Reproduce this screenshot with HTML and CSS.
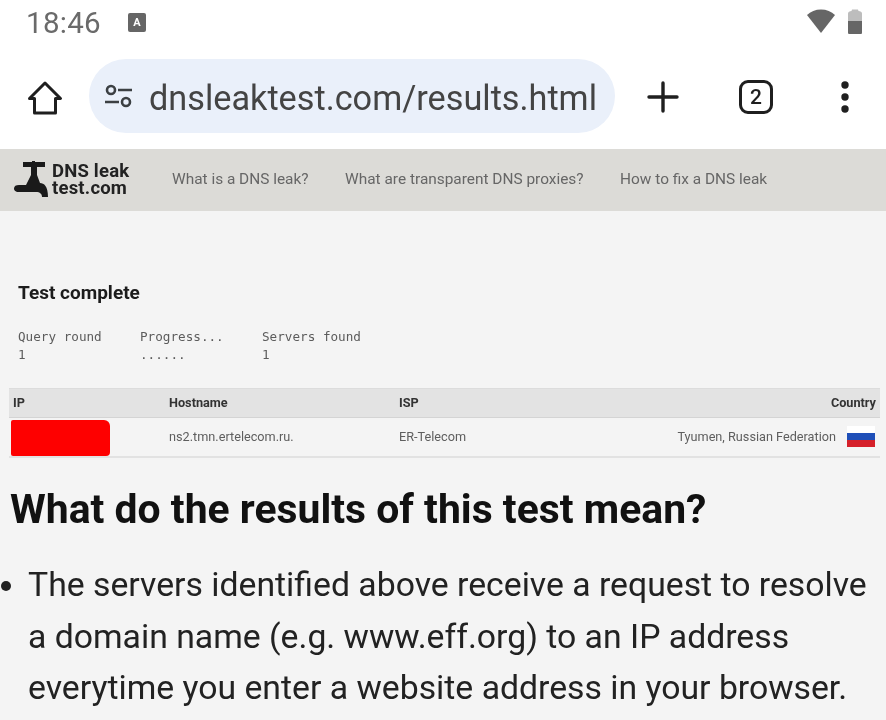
FILE: index.html
```html
<!DOCTYPE html>
<html lang="en">
<head>
<meta charset="utf-8">
<title>dnsleaktest.com results</title>
<link rel="stylesheet" href="styles.css">
</head>
<body>
<div class="screen">
  <header class="status">
    <div class="status-left">
      <span class="clock">18:46</span>
      <span class="a-badge">A</span>
    </div>
    <div class="status-right">
      <svg class="wifi" width="28" height="24" viewBox="0 0 28 24"><path d="M0 6C3.500 2.500 8.500 0.500 14 0.500S24.500 2.500 28 6L14 24Z" fill="#666"/></svg>
      <svg class="battery" width="14" height="25" viewBox="0 0 14 25"><path d="M4 0.500H10L10.500 2C12.500 2 14 3 14 4.500V12H0V4.500C0 3 1.500 2 3.500 2Z" fill="#bdbdbd"/><path d="M0 12H14V23.500C14 24.500 13.500 25 12.500 25H1.500C0.500 25 0 24.500 0 23.500Z" fill="#666"/></svg>
    </div>
  </header>

  <div class="toolbar">
    <svg class="home" width="36" height="36" viewBox="0 0 36 36" fill="none" stroke="#1f1f1f" stroke-width="3" stroke-linejoin="round"><path d="M2.500 18.500L18 3L33.500 18.500H28.500V33H7.500V18.500Z"/></svg>
    <div class="omnibox">
      <svg class="tune" width="30" height="24" viewBox="0 0 30 24" fill="none" stroke="#3c4043" stroke-width="2.600"><circle cx="7" cy="6" r="4"/><path d="M14 6H28M1 18H15"/><circle cx="22" cy="18" r="4"/></svg>
      <span class="url">dnsleaktest.com/results.html</span>
    </div>
    <svg class="plus" width="32" height="32" viewBox="0 0 32 32" stroke="#1f1f1f" stroke-width="3.400" stroke-linecap="round"><path d="M16 2V30M2 16H30"/></svg>
    <div class="tabs">2</div>
    <svg class="more" width="12" height="32" viewBox="0 0 12 32" fill="#1f1f1f"><circle cx="6" cy="4" r="3.700"/><circle cx="6" cy="16" r="3.700"/><circle cx="6" cy="28" r="3.700"/></svg>
  </div>

  <main class="page">
    <nav class="site-nav">
      <div class="logo">
        <svg class="tap" width="34" height="38" viewBox="0 0 34 38" fill="#1a1a1a"><path d="M18 1V0H21V1H31V6H23V14L26 22C30 22 34 25 34 36H28C28 33 26 31 22 31H5C1 31 0 29 0 27.500C0 25 2 24 5 24H12L17 14V6H9V1Z"/></svg>
        <div class="logo-text">DNS leak test.com</div>
      </div>
      <a class="nav-link">What is a DNS leak?</a>
      <a class="nav-link">What are transparent DNS proxies?</a>
      <a class="nav-link">How to fix a DNS leak</a>
    </nav>

    <h2 class="test-title">Test complete</h2>

    <div class="stats">
      <div class="stat"><span>Query round</span><span>1</span></div>
      <div class="stat"><span>Progress...</span><span>......</span></div>
      <div class="stat"><span>Servers found</span><span>1</span></div>
    </div>

    <table class="results">
      <thead>
        <tr><th class="c-ip">IP</th><th class="c-host">Hostname</th><th class="c-isp">ISP</th><th class="c-country">Country</th></tr>
      </thead>
      <tbody>
        <tr>
          <td class="c-ip"><div class="redact"></div></td>
          <td class="c-host">ns2.tmn.ertelecom.ru.</td>
          <td class="c-isp">ER-Telecom</td>
          <td class="c-country"><div class="place">Tyumen, Russian Federation<span class="flag"><i class="fw"></i><i class="fb"></i><i class="fr"></i></span></div></td>
        </tr>
      </tbody>
    </table>

    <h1 class="heading">What do the results of this test mean?</h1>
    <ul class="list">
      <li>The servers identified above receive a request to resolve a domain name (e.g. www.eff.org) to an IP address everytime you enter a website address in your browser.</li>
    </ul>
  </main>
</div>
</body>
</html>
```

FILE: styles.css
```css
* { box-sizing: border-box; }
html, body { margin: 0; padding: 0; background: #fff; }
body { width: 886px; height: 720px; overflow: hidden; font-family: Roboto, "Liberation Sans", sans-serif; }
.screen { width: 886px; height: 720px; overflow: hidden; display: flex; flex-direction: column; filter: blur(0.4px); }

.status { height: 45px; flex: none; display: flex; justify-content: space-between; align-items: center; padding: 0 24px 0 26px; }
.status-left { display: flex; align-items: center; gap: 27px; }
.clock { font-size: 29.500px; color: #6a6a6a; letter-spacing: 0.300px; }
.a-badge { width: 18px; height: 19px; background: #666; color: #fff; font-size: 11px; font-weight: 700; border-radius: 2px; display: flex; align-items: center; justify-content: center; }
.status-right { display: flex; align-items: center; gap: 13px; margin-bottom: 3px; }

.toolbar { height: 104px; flex: none; display: flex; align-items: center; padding: 0 0 0 27px; }
.home { flex: none; margin-right: 26px; margin-top: 2px; }
.omnibox { width: 526px; height: 74px; flex: none; background: #eaf0fa; border-radius: 37px; display: flex; align-items: center; padding-left: 15px; gap: 15px; margin-top: -2px; }
.tune { flex: none; }
.url { font-size: 34.250px; color: #444; white-space: nowrap; padding-top: 4px; }
.plus { flex: none; margin-left: 32px; }
.tabs { width: 34px; height: 34px; flex: none; margin-left: 60px; border: 3px solid #1f1f1f; border-radius: 9px; font-size: 21px; font-weight: 500; color: #1f1f1f; display: flex; align-items: center; justify-content: center; }
.more { flex: none; margin-left: 66px; }

.page { flex: 1; background: #f4f4f4; overflow: hidden; }
.site-nav { height: 62px; background: #dcdbd7; display: flex; align-items: center; padding: 0 0 3px 14px; }
.logo { display: flex; align-items: center; gap: 4px; width: 158px; flex: none; }
.tap { flex: none; margin-top: 3px; }
.logo-text { width: 84px; font-size: 18.500px; font-weight: 700; line-height: 17px; color: #222; letter-spacing: 0.200px; padding-top: 2px; }
.nav-link { font-size: 15.420px; color: #666; margin-right: 36.500px; white-space: nowrap; }

.test-title { margin: 72px 0 0 18px; font-size: 19px; line-height: 20px; font-weight: 700; color: #1c1c1c; }
.stats { display: flex; margin: 25px 0 0 18px; font-family: "DejaVu Sans Mono", monospace; font-size: 12.650px; line-height: 18px; color: #5c5c5c; }
.stat { width: 122px; display: flex; flex-direction: column; }

.results { width: 871px; margin: 24px 0 0 9px; border-collapse: collapse; table-layout: fixed; font-size: 12.700px; }
.results th { height: 29px; background: #e3e3e3; font-weight: 700; color: #333; text-align: left; padding: 0 4px 1px; border-top: 1px solid #dcdcdc; border-bottom: 1px solid #d4d4d4; }
.results td { height: 39px; color: #5e5e5e; padding: 0 4px 2px; border-bottom: 2px solid #e2e2e2; }
.c-ip { width: 156px; }
.c-host { width: 230px; }
.c-isp { width: 200px; }
.results .c-country { text-align: right; }
.results td.c-ip { padding: 2px 0 0 2px; }
.redact { width: 99px; height: 36px; background: #fe0000; border-radius: 2px 6px 4px 2px; }
.place { display: flex; align-items: center; justify-content: flex-end; gap: 11px; }
.flag { width: 28px; height: 21px; display: flex; flex-direction: column; margin-right: 1px; }
.flag i { flex: 1; display: block; }
.fw { background: #fff; }
.fb { background: #1f4fb8; }
.fr { background: #d5202a; }

.heading { margin: 30px 0 0 10px; font-size: 40.900px; line-height: 42px; font-weight: 700; color: #111; white-space: nowrap; }
.list { margin: 29px 0 0; padding: 0 0 0 28px; font-size: 33.750px; line-height: 51.500px; color: #222; }
.list li { padding-right: 10px; }
```
